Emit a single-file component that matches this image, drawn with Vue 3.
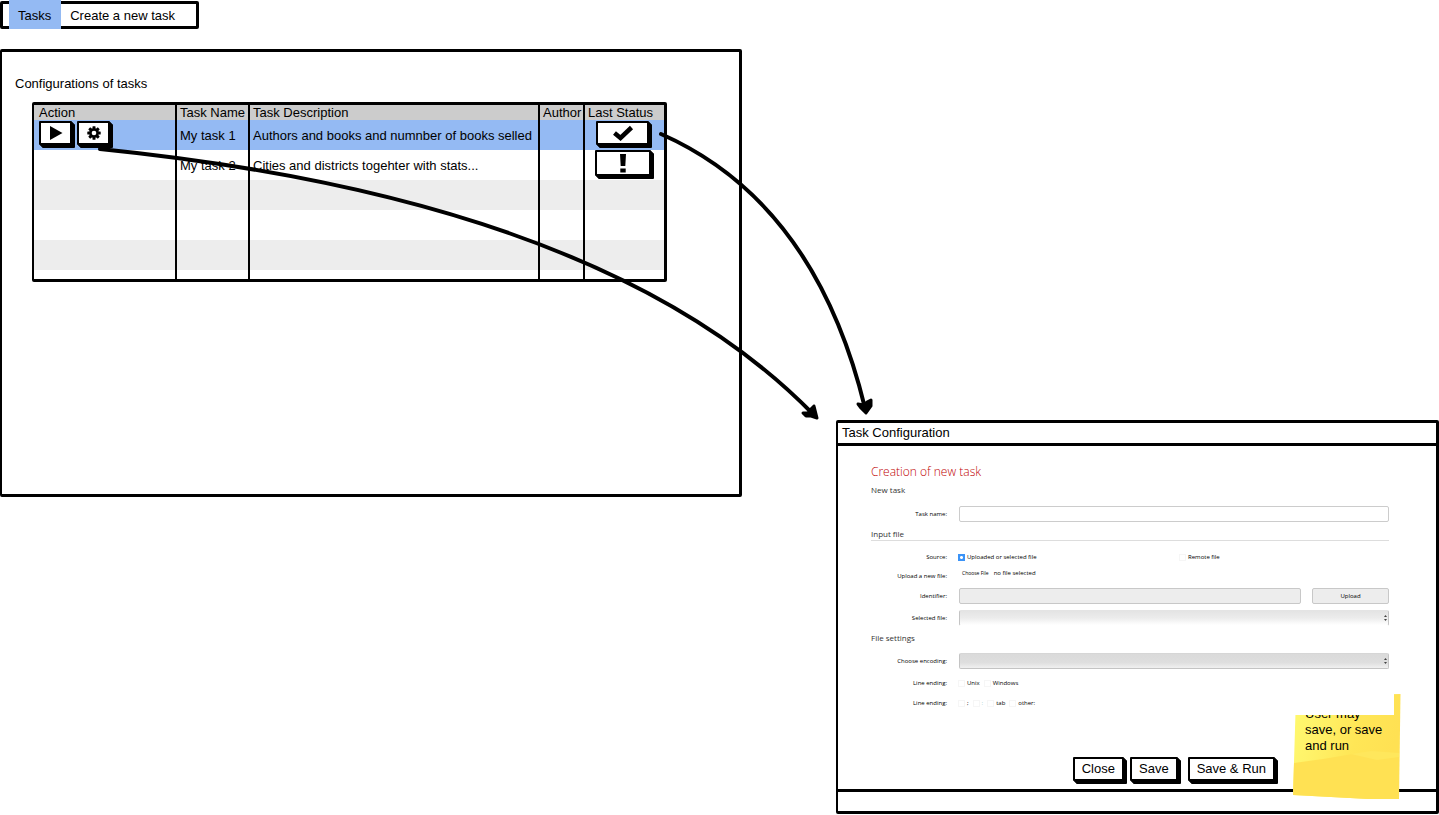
<script setup>
import { ref } from 'vue'

const tasks = [
  { name: 'My task 1', description: 'Authors and books and numnber of books selled', status: 'ok', selected: true },
  { name: 'My task 2', description: 'Cities and districts togehter with stats...', status: 'warn', selected: false },
]
const taskName = ref('')
const identifier = ref('')
const source = ref('upload')
</script>

<template>
  <div class="page">
    <nav class="menu">
      <a href="#tasks" class="menu-item active">Tasks</a>
      <a href="#new" class="menu-item">Create a new task</a>
    </nav>

    <main class="board">
      <section class="panel">
        <h1 class="panel-title">Configurations of tasks</h1>
        <div class="table-box">
          <table class="tasks">
            <colgroup>
              <col class="c-action" /><col class="c-name" /><col class="c-desc" /><col class="c-author" /><col class="c-status" />
            </colgroup>
            <thead>
              <tr>
                <th>Action</th><th>Task Name</th><th>Task Description</th><th>Author</th><th>Last Status</th>
              </tr>
            </thead>
            <tbody>
              <tr v-for="task in tasks" :key="task.name" :class="{ selected: task.selected }">
                <td>
                  <div v-if="task.selected" class="actions">
                    <button class="sketch icon-btn" aria-label="Run">
                      <svg width="14" height="14" viewBox="0 0 14 14"><path d="M1 0L13.500 7L1 14Z" /></svg>
                    </button>
                    <button class="sketch icon-btn" aria-label="Configure">
                      <svg width="14" height="14" viewBox="0 0 14 14">
                        <g>
                          <rect v-for="a in 4" :key="a" x="5.500" y="0.300" width="3" height="13.400" rx=".5" :transform="`rotate(${a * 45} 7 7)`" />
                        </g>
                        <circle cx="7" cy="7" r="4.800" />
                        <circle cx="7" cy="7" r="2.300" fill="#fff" />
                      </svg>
                    </button>
                  </div>
                </td>
                <td>{{ task.name }}</td>
                <td>{{ task.description }}</td>
                <td></td>
                <td class="status-cell">
                  <button v-if="task.status === 'ok'" class="sketch status-btn" aria-label="Succeeded">
                    <svg width="22" height="16" viewBox="0 0 22 16"><path d="M2.500 8L8.500 13L19.500 2.500" fill="none" stroke="#000" stroke-width="4.500" /></svg>
                  </button>
                  <button v-else class="sketch status-btn tall" aria-label="Attention">
                    <svg width="8" height="19" viewBox="0 0 8 19"><path d="M1 0H7L6.300 12H1.700ZM1.300 14.500H6.700V18.500H1.300Z" /></svg>
                  </button>
                </td>
              </tr>
              <tr v-for="n in 3" :key="n"><td v-for="c in 5" :key="c"></td></tr>
              <tr class="last"><td v-for="c in 5" :key="c"></td></tr>
            </tbody>
          </table>
        </div>
      </section>

      <section class="dialog">
        <h2 class="dialog-title">Task Configuration</h2>
        <form class="form" @submit.prevent>
          <h3 class="form-title">Creation of new task</h3>
          <h4 class="group">New task</h4>
          <div class="row g9">
            <label for="task-name">Task name:</label>
            <input id="task-name" v-model="taskName" type="text" />
          </div>
          <h4 class="group ruled">Input file</h4>
          <div class="row g8">
            <span class="label">Source:</span>
            <div class="halves">
              <label class="choice"><input v-model="source" type="radio" value="upload" />Uploaded or selected file</label>
              <label class="choice"><input v-model="source" type="radio" value="remote" />Remote file</label>
            </div>
          </div>
          <div class="row g3">
            <span class="label">Upload a new file:</span>
            <div class="file"><button type="button">Choose File</button><span>no file selected</span></div>
          </div>
          <div class="row g4">
            <label for="identifier">Identifier:</label>
            <div class="upload">
              <input id="identifier" v-model="identifier" class="grey" type="text" />
              <button type="button">Upload</button>
            </div>
          </div>
          <div class="row g6">
            <label for="selected-file">Selected file:</label>
            <div class="select fade">
              <select id="selected-file"></select>
              <svg width="3" height="6" viewBox="0 0 3 6"><path d="M0 2L1.500 0L3 2ZM0 4L1.500 6L3 4Z" /></svg>
            </div>
          </div>
          <h4 class="group g6">File settings</h4>
          <div class="row g8">
            <label for="encoding">Choose encoding:</label>
            <div class="select">
              <select id="encoding"></select>
              <svg width="3" height="6" viewBox="0 0 3 6"><path d="M0 2L1.500 0L3 2ZM0 4L1.500 6L3 4Z" /></svg>
            </div>
          </div>
          <div class="row g6">
            <span class="label">Line ending:</span>
            <div class="choices">
              <label class="choice"><input type="checkbox" />Unix</label>
              <label class="choice"><input type="checkbox" />Windows</label>
            </div>
          </div>
          <div class="row g4">
            <span class="label">Line ending:</span>
            <div class="choices">
              <label class="choice"><input type="checkbox" />;</label>
              <label class="choice pale"><input type="checkbox" />:</label>
              <label class="choice"><input type="checkbox" />tab</label>
              <label class="choice"><input type="checkbox" />other:</label>
            </div>
          </div>
        </form>
        <div class="buttons">
          <button class="sketch text-btn">Close</button>
          <button class="sketch text-btn">Save</button>
          <button class="sketch text-btn apart">Save &amp; Run</button>
        </div>
        <div class="dialog-foot"></div>

        <aside class="note">
          <svg viewBox="0 0 108 106" preserveAspectRatio="none">
            <defs>
              <linearGradient id="sheet" x1="0" y1="0" x2="1" y2="0.250">
                <stop offset="0" stop-color="#fffa6e" /><stop offset=".25" stop-color="#fff36a" />
                <stop offset=".65" stop-color="#ffe656" /><stop offset="1" stop-color="#ffe153" />
              </linearGradient>
            </defs>
            <path d="M3 2L107.500 0L106 105L76 105L0 101Z" fill="url(#sheet)" />
            <path d="M1 69L30 65L60 60L74 59L90 62L106 60L106 105L76 105L0 101Z" fill="#ffe153" />
            <path d="M58 60L78 57L106 59L106 63L84 66Z" fill="#ffe75c" />
          </svg>
          <p>User may save, or save and run</p>
        </aside>
      </section>
    </main>

    <svg class="arrows" viewBox="0 0 1439 815" preserveAspectRatio="none" aria-hidden="true">
      <path d="M100 149Q604 200 813 414" />
      <path d="M661 134Q815 202 865 408" />
      <path class="head" d="M817 418L814 406L811 409L808 413L803 413L806 416L811 416Z" />
      <path class="head" d="M866 413L871 406L871 400L867 402L864 405L858 404L861 408Z" />
    </svg>
  </div>
</template>

<style>
body {
  margin: 0;
  background: #fff;
}
</style>

<style scoped>
.page {
  position: relative;
  padding: 1px 0;
  color: #000;
  font-family: "Liberation Sans", Arial, sans-serif;
  font-size: 13px;
  line-height: 16px;
}
h1, h2, h3, h4, p {
  margin: 0;
  font-size: inherit;
  font-weight: 400;
}
button, input, select {
  box-sizing: border-box;
  margin: 0;
  padding: 0;
  color: inherit;
  font: inherit;
}
.menu {
  display: flex;
  box-sizing: border-box;
  width: max-content;
  height: 28px;
  padding: 0 11px 0 6px;
  border: 3px solid #000;
  border-radius: 2px;
}
.menu-item {
  margin: -4px 0 -3px;
  padding: 8px 10px 5px 9px;
  color: #000;
  text-decoration: none;
}
.menu-item.active {
  background: #94baf3;
}
.board {
  display: grid;
  grid-template-columns: 742fr 94fr 603fr;
  align-items: start;
  margin-top: 20px;
}
.panel {
  box-sizing: border-box;
  min-height: 448px;
  padding: 24px 72px 22px 30px;
  border: 3px solid #000;
  border-left-width: 2px;
  border-radius: 2px;
}
.panel-title {
  margin-left: -17px;
}
.table-box {
  margin-top: 10px;
  border: 3px solid #000;
  border-left-width: 2px;
  border-radius: 2px;
}
.tasks {
  width: 100%;
  table-layout: fixed;
  border-collapse: collapse;
}
.c-action { width: 142px; }
.c-name { width: 73px; }
.c-desc { width: 290px; }
.c-author { width: 45px; }
th, td {
  padding: 0 2px 0 3px;
  border-right: 2px solid #000;
  font-weight: 400;
  text-align: left;
  white-space: nowrap;
}
th:last-child, td:last-child {
  border-right: 0;
}
th {
  height: 15px;
  line-height: 15px;
  background: #ccc;
}
td {
  box-sizing: border-box;
  height: 30px;
  padding-top: 2px;
}
th:first-child, td:first-child {
  padding-left: 5px;
}
tbody tr:nth-child(odd) {
  background: #ededed;
}
tbody tr.selected {
  background: #94baf3;
}
tbody tr.last td {
  height: 9px;
}
tbody tr.last {
  background: #fff;
}
.actions {
  display: flex;
  gap: 5px;
  margin-bottom: 4px;
}
.sketch {
  display: flex;
  align-items: center;
  justify-content: center;
  height: 24px;
  border: 2px solid #000;
  border-radius: 1px;
  background: #fff;
  box-shadow: 1px 1px #000, 2px 2px #000, 3px 3px #000;
}
.icon-btn {
  width: 33px;
}
td:first-child, .status-cell {
  padding-top: 0;
}
.status-cell {
  padding: 0 4px 0 0;
}
.status-btn {
  width: 53px;
  margin: 0 auto 4px;
}
.status-btn.tall {
  width: 56px;
  height: 26px;
}
.dialog {
  grid-column: 3;
  position: relative;
  margin-top: 371px;
  border: 3px solid #000;
  border-left-width: 2px;
  border-radius: 2px;
}
.dialog-title {
  padding: 2px 4px;
  border-bottom: 3px solid #000;
}
.form {
  position: relative;
  z-index: 1;
  margin-right: 42px;
  padding: 18px 5px 4px 33px;
  background: #fff;
  font-family: "Open Sans", "Noto Sans", sans-serif;
  font-size: 6px;
  line-height: 8px;
}
.form-title {
  color: #c00000;
  font-size: 12px;
  font-weight: 300;
  line-height: 16px;
}
.group {
  box-sizing: border-box;
  height: 13px;
  margin-top: 4px;
  color: #333;
  font-size: 8px;
  line-height: 12px;
}
.ruled {
  margin-top: 6px;
  border-bottom: 1px solid #ddd;
}
.row {
  display: grid;
  grid-template-columns: 76px 1fr;
  column-gap: 12px;
  align-items: center;
  height: 16px;
}
.row > label, .row > .label {
  text-align: right;
  white-space: nowrap;
}
.g3 { margin-top: 3px; }
.g4 { margin-top: 4px; }
.g6 { margin-top: 6px; }
.g8 { margin-top: 8px; }
.g9 { margin-top: 9px; }
input[type="text"] {
  width: 100%;
  height: 16px;
  border: 1px solid #ccc;
  border-radius: 2px;
  background: #fff;
}
input[type="text"].grey, .upload button {
  height: 16px;
  border: 1px solid #c8c8c8;
  border-radius: 2px;
  background: #ededed;
}
.halves {
  display: grid;
  grid-template-columns: 1fr 1fr;
  gap: 12px;
}
.choice {
  display: flex;
  align-items: center;
  gap: 2px;
  margin-left: -1px;
  white-space: nowrap;
}
.choice input {
  appearance: none;
  width: 7px;
  height: 7px;
  border: 1px solid #f6f6f6;
}
.choice input:checked {
  border: 0;
  background: radial-gradient(circle, #fff 1px, #3b93f7 2px);
}
.choices {
  display: flex;
  gap: 5px;
}
.pale {
  color: #9cc;
}
.file {
  display: flex;
  gap: 5px;
  margin: -6px 0 0 3px;
}
.file button {
  border: 0;
  background: none;
  font-size: 5px;
}
.upload {
  display: grid;
  grid-template-columns: 1fr 77px;
  gap: 11px;
}
.select {
  position: relative;
  height: 16px;
}
.select select {
  appearance: none;
  display: block;
  width: 100%;
  height: 16px;
  border: 1px solid #c4c4c4;
  border-top-color: #d6d6d6;
  border-radius: 2px;
  background: linear-gradient(#dadada, #dedede 60%, #f0f0f0);
}
.select.fade select {
  border-top-color: #e4e4e4;
  border-bottom-color: #fff;
  background: linear-gradient(#e4e4e4, #ececec 50%, #fff);
}
.select svg {
  position: absolute;
  top: 5px;
  right: 2px;
  fill: #444;
}
.buttons {
  display: flex;
  justify-content: flex-end;
  gap: 6px;
  margin: 42px 161px 8px 0;
}
.text-btn {
  padding: 0 7px;
}
.text-btn.apart {
  margin-left: 4px;
}
.dialog-foot {
  height: 19px;
  border-top: 3px solid #000;
}
.note {
  position: absolute;
  right: 35px;
  bottom: 11px;
  width: 108px;
  height: 106px;
}
.note svg {
  display: block;
  width: 100%;
  height: 100%;
}
.note p {
  position: absolute;
  top: 12px;
  left: 12px;
  width: 86px;
}
.arrows {
  position: absolute;
  z-index: 2;
  top: 0;
  left: 0;
  width: 100%;
  height: 100%;
  pointer-events: none;
  fill: none;
  stroke: #000;
  stroke-width: 4;
  stroke-linecap: round;
  stroke-linejoin: round;
}
.arrows .head {
  fill: #000;
  stroke-width: 3;
}
</style>
